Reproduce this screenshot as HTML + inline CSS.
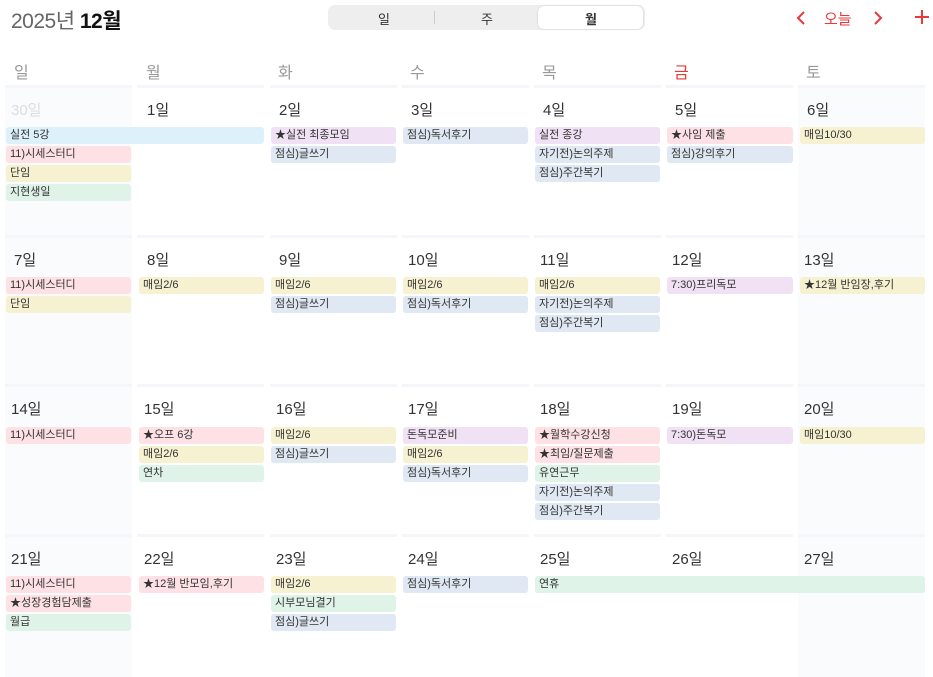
<!DOCTYPE html>
<html><head><meta charset="utf-8"><style>
*{margin:0;padding:0;box-sizing:border-box}
body{width:933px;height:677px;background:#fff;position:relative;overflow:hidden;font-family:"Liberation Sans","Noto Sans CJK KR",sans-serif;color:#333}
.a{position:absolute}
.title{left:11px;top:5px;font-size:21px;color:#666;letter-spacing:-0.5px}
.title b{color:#111;font-weight:700}
.seg{left:328px;top:5px;width:317px;height:25px;background:#eeeeef;border-radius:7px}
.seg span{position:absolute;top:4px;font-size:13px;color:#333}
.sel{left:210px;top:1px;width:105px;height:23px;background:#fff;border-radius:6px;box-shadow:0 0 2px rgba(0,0,0,.15)}
.red{color:#e83a3a}
.wd{top:59px;font-size:16px;color:#999}
.wd.red{color:#e83a3a}
.cell{width:127px;border-top:3px solid #f5f6f9}
.we{background:#fafbfd}
.dn{font-size:15px;color:#333}
.ev{height:17px;border-radius:3px;font-size:11px;line-height:17px;padding-left:4px;white-space:nowrap;overflow:hidden;color:#333}
.b{background:#ddf1fb}.p{background:#fde1e4}.y{background:#f5f1d1}.g{background:#dff3e8}.v{background:#f1e1f4}.s{background:#e0e8f3}
</style></head><body>
<div class="a title">2025년 <b>12월</b></div>
<div class="a seg">
<div class="a sel"></div>
<span style="left:50px">일</span>
<div class="a" style="left:106px;top:6px;width:1px;height:13px;background:#ccc"></div>
<span style="left:153px">주</span>
<span style="left:257px;font-weight:700">월</span>
</div>
<svg class="a" style="left:795px;top:10px" width="12" height="16"><path d="M9 2 L3 8 L9 14" stroke="#e83a3a" stroke-width="2" fill="none"/></svg>
<div class="a red" style="left:824px;top:8px;font-size:15px">오늘</div>
<svg class="a" style="left:872px;top:10px" width="12" height="16"><path d="M3 2 L9 8 L3 14" stroke="#e83a3a" stroke-width="2" fill="none"/></svg>
<svg class="a" style="left:914px;top:9px" width="16" height="16"><path d="M8 1 V15 M1 8 H15" stroke="#e83a3a" stroke-width="2"/></svg>

<div class="a wd" style="left:14px">일</div>
<div class="a wd" style="left:146px">월</div>
<div class="a wd" style="left:278px">화</div>
<div class="a wd" style="left:410px">수</div>
<div class="a wd" style="left:542px">목</div>
<div class="a wd red" style="left:674px">금</div>
<div class="a wd" style="left:806px">토</div>

<div class="a cell we" style="left:5px;top:85px;height:150px"></div>
<div class="a cell" style="left:137px;top:85px;height:150px"></div>
<div class="a cell" style="left:270px;top:85px;height:150px"></div>
<div class="a cell" style="left:402px;top:85px;height:150px"></div>
<div class="a cell" style="left:534px;top:85px;height:150px"></div>
<div class="a cell" style="left:666px;top:85px;height:150px"></div>
<div class="a cell we" style="left:798px;top:85px;height:150px"></div>

<div class="a cell we" style="left:5px;top:235px;height:150px"></div>
<div class="a cell" style="left:137px;top:235px;height:150px"></div>
<div class="a cell" style="left:270px;top:235px;height:150px"></div>
<div class="a cell" style="left:402px;top:235px;height:150px"></div>
<div class="a cell" style="left:534px;top:235px;height:150px"></div>
<div class="a cell" style="left:666px;top:235px;height:150px"></div>
<div class="a cell we" style="left:798px;top:235px;height:150px"></div>

<div class="a cell we" style="left:5px;top:384px;height:150px"></div>
<div class="a cell" style="left:137px;top:384px;height:150px"></div>
<div class="a cell" style="left:270px;top:384px;height:150px"></div>
<div class="a cell" style="left:402px;top:384px;height:150px"></div>
<div class="a cell" style="left:534px;top:384px;height:150px"></div>
<div class="a cell" style="left:666px;top:384px;height:150px"></div>
<div class="a cell we" style="left:798px;top:384px;height:150px"></div>

<div class="a cell we" style="left:5px;top:534px;height:143px"></div>
<div class="a cell" style="left:137px;top:534px;height:143px"></div>
<div class="a cell" style="left:270px;top:534px;height:143px"></div>
<div class="a cell" style="left:402px;top:534px;height:143px"></div>
<div class="a cell" style="left:534px;top:534px;height:143px"></div>
<div class="a cell" style="left:666px;top:534px;height:143px"></div>
<div class="a cell we" style="left:798px;top:534px;height:143px"></div>

<div class="a dn" style="left:11px;top:99px;color:#ddd">30일</div>
<div class="a dn" style="left:147px;top:99px">1일</div>
<div class="a dn" style="left:279px;top:99px">2일</div>
<div class="a dn" style="left:411px;top:99px">3일</div>
<div class="a dn" style="left:543px;top:99px">4일</div>
<div class="a dn" style="left:675px;top:99px">5일</div>
<div class="a dn" style="left:807px;top:99px">6일</div>

<div class="a dn" style="left:14px;top:249px">7일</div>
<div class="a dn" style="left:147px;top:249px">8일</div>
<div class="a dn" style="left:279px;top:249px">9일</div>
<div class="a dn" style="left:408px;top:249px">10일</div>
<div class="a dn" style="left:540px;top:249px">11일</div>
<div class="a dn" style="left:672px;top:249px">12일</div>
<div class="a dn" style="left:804px;top:249px">13일</div>

<div class="a dn" style="left:11px;top:398px">14일</div>
<div class="a dn" style="left:144px;top:398px">15일</div>
<div class="a dn" style="left:276px;top:398px">16일</div>
<div class="a dn" style="left:408px;top:398px">17일</div>
<div class="a dn" style="left:540px;top:398px">18일</div>
<div class="a dn" style="left:672px;top:398px">19일</div>
<div class="a dn" style="left:804px;top:398px">20일</div>

<div class="a dn" style="left:11px;top:548px">21일</div>
<div class="a dn" style="left:144px;top:548px">22일</div>
<div class="a dn" style="left:276px;top:548px">23일</div>
<div class="a dn" style="left:408px;top:548px">24일</div>
<div class="a dn" style="left:540px;top:548px">25일</div>
<div class="a dn" style="left:672px;top:548px">26일</div>
<div class="a dn" style="left:804px;top:548px">27일</div>

<div class="a ev b" style="left:6px;top:127px;width:258px">실전 5강</div>
<div class="a ev p" style="left:6px;top:146px;width:125px">11)시세스터디</div>
<div class="a ev y" style="left:6px;top:165px;width:125px">단임</div>
<div class="a ev g" style="left:6px;top:184px;width:125px">지현생일</div>
<div class="a ev v" style="left:271px;top:127px;width:125px">★실전 최종모임</div>
<div class="a ev s" style="left:271px;top:146px;width:125px">점심)글쓰기</div>
<div class="a ev s" style="left:403px;top:127px;width:125px">점심)독서후기</div>
<div class="a ev v" style="left:535px;top:127px;width:125px">실전 종강</div>
<div class="a ev s" style="left:535px;top:146px;width:125px">자기전)논의주제</div>
<div class="a ev s" style="left:535px;top:165px;width:125px">점심)주간복기</div>
<div class="a ev p" style="left:667px;top:127px;width:126px">★사임 제출</div>
<div class="a ev s" style="left:667px;top:146px;width:126px">점심)강의후기</div>
<div class="a ev y" style="left:800px;top:127px;width:125px">매임10/30</div>

<div class="a ev p" style="left:6px;top:277px;width:125px">11)시세스터디</div>
<div class="a ev y" style="left:6px;top:296px;width:125px">단임</div>
<div class="a ev y" style="left:139px;top:277px;width:125px">매임2/6</div>
<div class="a ev y" style="left:271px;top:277px;width:125px">매임2/6</div>
<div class="a ev s" style="left:271px;top:296px;width:125px">점심)글쓰기</div>
<div class="a ev y" style="left:403px;top:277px;width:125px">매임2/6</div>
<div class="a ev s" style="left:403px;top:296px;width:125px">점심)독서후기</div>
<div class="a ev y" style="left:535px;top:277px;width:125px">매임2/6</div>
<div class="a ev s" style="left:535px;top:296px;width:125px">자기전)논의주제</div>
<div class="a ev s" style="left:535px;top:315px;width:125px">점심)주간복기</div>
<div class="a ev v" style="left:667px;top:277px;width:126px">7:30)프리독모</div>
<div class="a ev y" style="left:800px;top:277px;width:125px">★12월 반임장,후기</div>

<div class="a ev p" style="left:6px;top:427px;width:125px">11)시세스터디</div>
<div class="a ev p" style="left:139px;top:427px;width:125px">★오프 6강</div>
<div class="a ev y" style="left:139px;top:446px;width:125px">매임2/6</div>
<div class="a ev g" style="left:139px;top:465px;width:125px">연차</div>
<div class="a ev y" style="left:271px;top:427px;width:125px">매임2/6</div>
<div class="a ev s" style="left:271px;top:446px;width:125px">점심)글쓰기</div>
<div class="a ev v" style="left:403px;top:427px;width:125px">돈독모준비</div>
<div class="a ev y" style="left:403px;top:446px;width:125px">매임2/6</div>
<div class="a ev s" style="left:403px;top:465px;width:125px">점심)독서후기</div>
<div class="a ev p" style="left:535px;top:427px;width:125px">★월학수강신청</div>
<div class="a ev p" style="left:535px;top:446px;width:125px">★최임/질문제출</div>
<div class="a ev g" style="left:535px;top:465px;width:125px">유연근무</div>
<div class="a ev s" style="left:535px;top:484px;width:125px">자기전)논의주제</div>
<div class="a ev s" style="left:535px;top:503px;width:125px">점심)주간복기</div>
<div class="a ev v" style="left:667px;top:427px;width:126px">7:30)돈독모</div>
<div class="a ev y" style="left:800px;top:427px;width:125px">매임10/30</div>

<div class="a ev p" style="left:6px;top:576px;width:125px">11)시세스터디</div>
<div class="a ev p" style="left:6px;top:595px;width:125px">★성장경험담제출</div>
<div class="a ev g" style="left:6px;top:614px;width:125px">월급</div>
<div class="a ev p" style="left:139px;top:576px;width:125px">★12월 반모임,후기</div>
<div class="a ev y" style="left:271px;top:576px;width:125px">매임2/6</div>
<div class="a ev g" style="left:271px;top:595px;width:125px">시부모님결기</div>
<div class="a ev s" style="left:271px;top:614px;width:125px">점심)글쓰기</div>
<div class="a ev s" style="left:403px;top:576px;width:125px">점심)독서후기</div>
<div class="a ev g" style="left:535px;top:576px;width:390px">연휴</div>
</body></html>
